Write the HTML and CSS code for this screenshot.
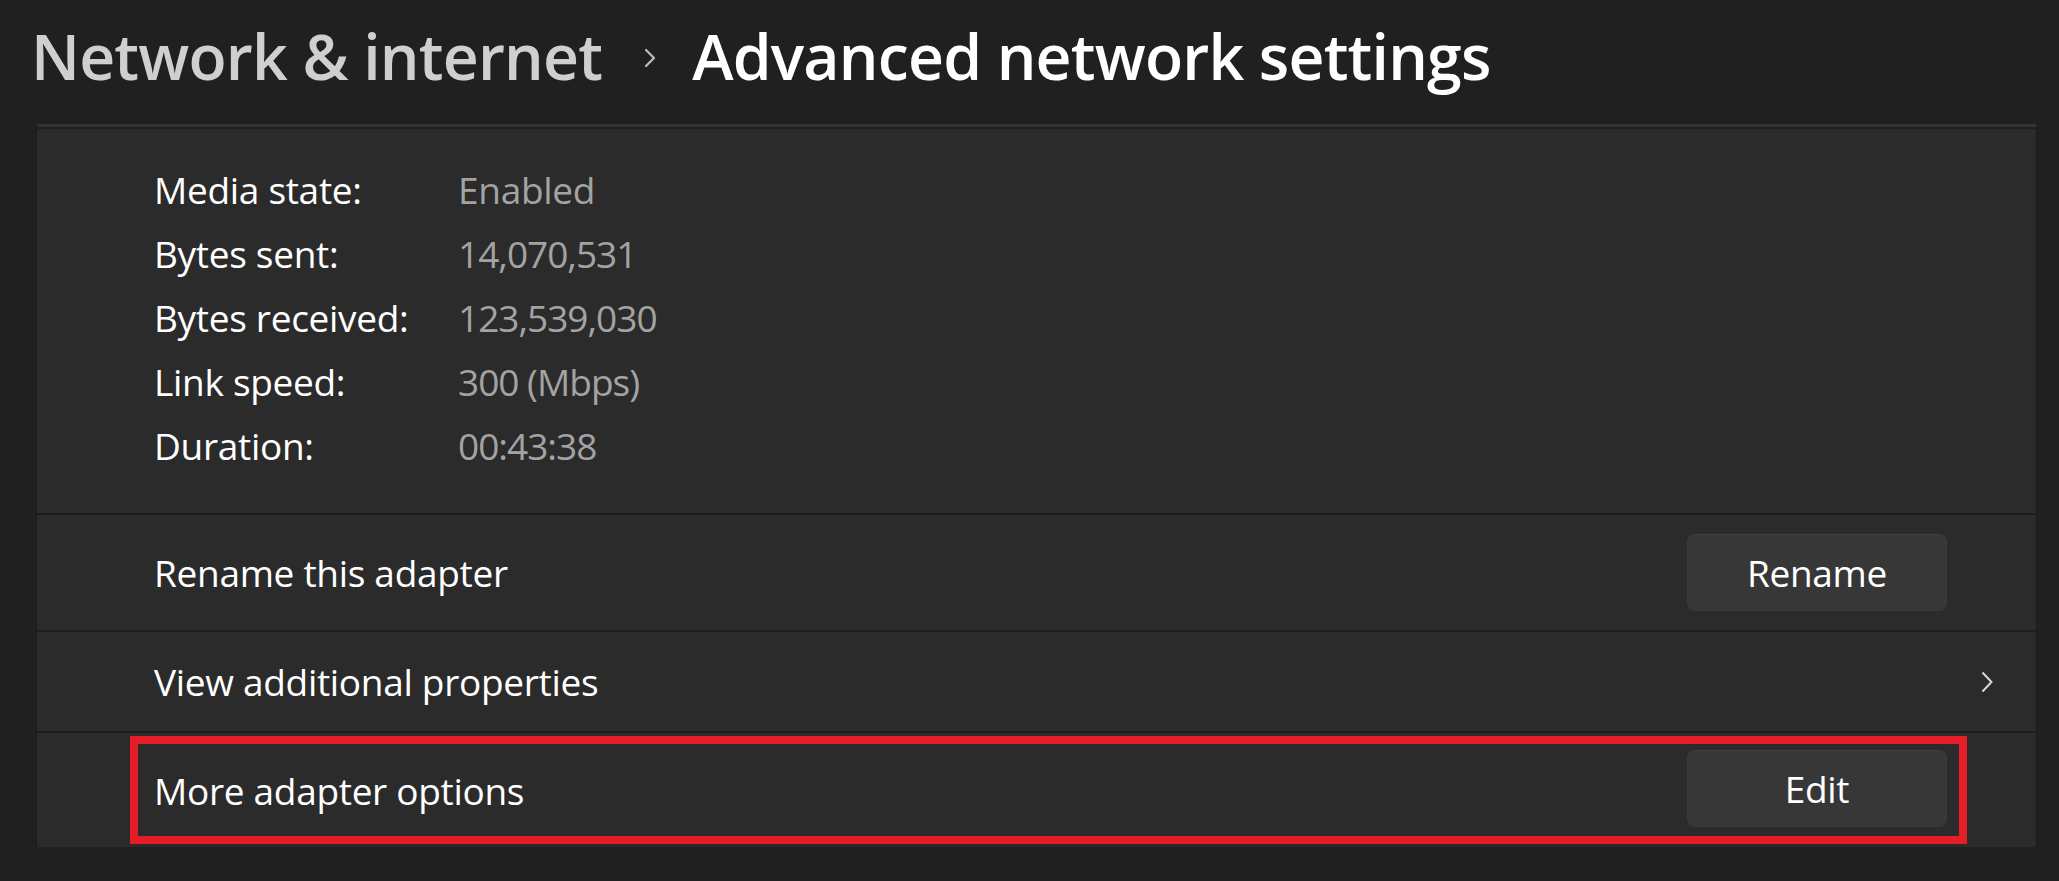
FILE: index.html
```html
<!DOCTYPE html>
<html lang="en">
<head>
<meta charset="utf-8">
<title>Advanced network settings</title>
<link rel="stylesheet" href="styles.css">
</head>
<body>
<div class="page">
  <header class="crumbs">
    <span class="crumb-parent">Network &amp; internet</span>
    <svg class="crumb-chev" width="12" height="20" viewBox="0 0 12 20"><polyline points="2,2 10,10 2,18" fill="none" stroke="#bdbdbd" stroke-width="2.2" stroke-linecap="round" stroke-linejoin="round"/></svg>
    <span class="crumb-current">Advanced network settings</span>
  </header>

  <div class="card">
    <div class="prev-edge"></div>
    <section class="details">
      <div class="label">Media state:</div><div class="value">Enabled</div>
      <div class="label">Bytes sent:</div><div class="value num">14,070,531</div>
      <div class="label">Bytes received:</div><div class="value num">123,539,030</div>
      <div class="label">Link speed:</div><div class="value num">300 (Mbps)</div>
      <div class="label">Duration:</div><div class="value num">00:43:38</div>
    </section>
    <div class="sep"></div>
    <div class="row row-rename">
      <span class="row-text">Rename this adapter</span>
      <button class="btn">Rename</button>
    </div>
    <div class="sep"></div>
    <div class="row row-view">
      <span class="row-text">View additional properties</span>
      <svg class="row-chev" width="12" height="22" viewBox="0 0 12 22"><polyline points="1.5,1.5 10.5,11 1.5,20.5" fill="none" stroke="#d8d8d8" stroke-width="2"/></svg>
    </div>
    <div class="sep"></div>
    <div class="row row-more">
      <span class="row-text">More adapter options</span>
      <button class="btn">Edit</button>
      <div class="highlight"></div>
    </div>
  </div>
</div>
</body>
</html>
```

FILE: styles.css
```css
html, body {
  margin: 0;
  padding: 0;
  background: #202020;
}
body {
  font-family: "Open Sans", "Noto Sans", sans-serif;
  color: #ffffff;
  width: 2059px;
  height: 881px;
  overflow: hidden;
}
.page {
  padding-left: 37px;
  padding-right: 23px;
}
.crumbs {
  box-sizing: border-box;
  height: 124px;
  padding-top: 25px;
  padding-left: 0;
  margin-left: -6px;
  display: flex;
  align-items: flex-start;
  font-size: 62.5px;
  line-height: 1;
  font-weight: 600;
  letter-spacing: -0.8px;
}
.crumb-parent {
  color: #cfcfcf;
}
.crumb-chev {
  margin: 23px 36px 0 42px;
}
.crumb-current {
  color: #ffffff;
}
.card {
  background: #2b2b2b;
  box-shadow: -1px 0 0 #1c1c1c, 1px 0 0 #1c1c1c;
  font-size: 37px;
  letter-spacing: -0.3px;
}
.prev-edge {
  height: 3px;
  background: #333333;
  border-bottom: 2px solid #1e1e1e;
}
.details {
  display: grid;
  grid-template-columns: 304px auto;
  padding: 29px 0 35px 117px;
  line-height: 64px;
}
.label {
  color: #ffffff;
}
.value {
  color: #a3a3a3;
}
.value.num {
  letter-spacing: -1px;
}
.sep {
  height: 2px;
  background: #1d1d1d;
}
.row {
  position: relative;
  display: flex;
  align-items: center;
  justify-content: space-between;
  padding-left: 117px;
}
.row-rename {
  height: 115px;
  padding-right: 89px;
}
.row-view {
  height: 99px;
  padding-right: 43px;
}
.row-more {
  height: 114px;
  padding-right: 89px;
}
.row-text {
  color: #ffffff;
}
.btn {
  width: 260px;
  height: 77px;
  border-radius: 8px;
  background: #373737;
  border: 1px solid #3a3a3a;
  border-top-color: #404040;
  color: #ffffff;
  font-family: inherit;
  font-size: 37px;
  letter-spacing: -0.3px;
  padding: 0;
}
.row-more .btn {
  margin-top: -3px;
}
.highlight {
  position: absolute;
  left: 93px;
  top: 3px;
  width: 1837px;
  height: 108px;
  box-sizing: border-box;
  border: 8px solid #e51d27;
  pointer-events: none;
}
```
